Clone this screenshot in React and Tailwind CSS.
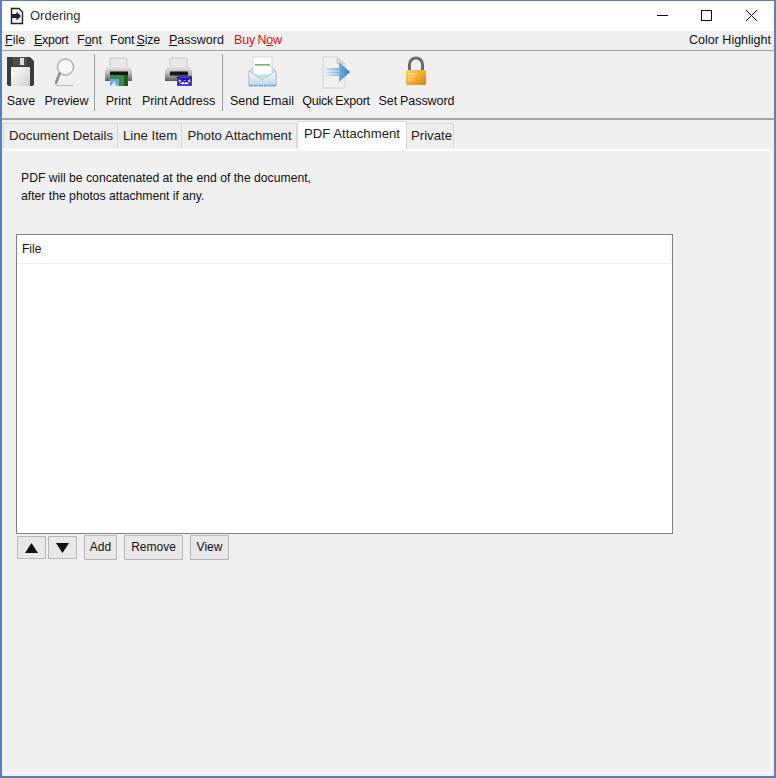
import React from "react";

function DocIcon() {
  return (
    <svg width="16" height="18" viewBox="0 0 16 18">
      <path d="M2.5 1.5H10L13.5 5V16.5H2.5Z" fill="#fbf8e8" stroke="#222" strokeWidth="1.4" />
      <path d="M3 11V7h4.5V4.5L12 9l-4.5 4.5V11Z" fill="#1b1b50" />
    </svg>
  );
}

function SaveIcon() {
  return (
    <svg width="28" height="30" viewBox="0 0 28 30" className="-ml-[2px]">
      <defs>
        <linearGradient id="sv" x1="0" y1="0" x2="1" y2="1">
          <stop offset="0" stopColor="#ffffff" />
          <stop offset="1" stopColor="#cfcfcf" />
        </linearGradient>
      </defs>
      <path d="M1 1H24L28 5V28.5L26.5 30H2.5L1 28.5Z" fill="#3c3c3c" />
      <rect x="7" y="1" width="14" height="9" fill="#4d4d4d" />
      <rect x="14" y="2" width="4" height="7" fill="#dcdcdc" />
      <rect x="5" y="11" width="19" height="19" fill="url(#sv)" />
    </svg>
  );
}

function PreviewIcon() {
  return (
    <svg width="24" height="32" viewBox="0 0 24 32">
      <circle cx="10.5" cy="11" r="8" fill="#f8f8f8" stroke="#bdbdbd" strokeWidth="1.8" />
      <path d="M4.5 17.5L1 27" stroke="#8f8f8f" strokeWidth="2.6" strokeLinecap="round" />
      <path d="M1 29.5H19" stroke="#c4c4c4" strokeWidth="1.4" />
    </svg>
  );
}

function PrinterBody({ id }) {
  return (
    <>
      <defs>
        <linearGradient id={id} x1="0" y1="0" x2="0" y2="1">
          <stop offset="0" stopColor="#e6e6e6" />
          <stop offset="0.45" stopColor="#b7b7b7" />
          <stop offset="1" stopColor="#5c5c5c" />
        </linearGradient>
      </defs>
      <rect x="6" y="1" width="17" height="11" rx="1" fill="#e9e9e9" stroke="#c8c8c8" />
      <path d="M3 10H26L28 14V24H1V14Z" fill={`url(#${id})`} />
      <rect x="6" y="14.5" width="18" height="4" fill="#151515" />
    </>
  );
}

function PrintIcon() {
  return (
    <svg width="29" height="30" viewBox="0 0 29 30" className="mt-px">
      <PrinterBody id="pr1" />
      <rect x="6" y="18" width="18" height="11" fill="#3c8a3c" />
      <rect x="6" y="22" width="9" height="7" fill="#6ea8e0" />
      <path d="M7 29l3-5 3 5" fill="#d9e8f8" />
      <path d="M20 18h4v11h-4z" fill="#1f5a1f" />
    </svg>
  );
}

function PrintAddressIcon() {
  return (
    <svg width="29" height="30" viewBox="0 0 29 30" className="mt-px">
      <PrinterBody id="pr2" />
      <rect x="14" y="20" width="13" height="8" fill="#f5f5ff" stroke="#2018b8" strokeWidth="1.6" />
      <path d="M14 20.5L20.5 25 27 20.5M14 27.5l5-4M27 27.5l-5-4" fill="none" stroke="#2018b8" strokeWidth="1.6" />
      <rect x="16" y="21" width="9" height="2" fill="#2018b8" />
    </svg>
  );
}

function MailIcon() {
  return (
    <svg width="29" height="32" viewBox="0 0 29 32">
      <defs>
        <linearGradient id="ml" x1="0" y1="0" x2="0" y2="1">
          <stop offset="0" stopColor="#fbfdfe" />
          <stop offset="1" stopColor="#bcd6e8" />
        </linearGradient>
      </defs>
      <path d="M1 15L14 5 28 15V29H1Z" fill="#cfdfe8" stroke="#a9bcc8" strokeWidth="0.8" />
      <rect x="5" y="1" width="19" height="18" fill="#fdfdfd" stroke="#c9d2d6" strokeWidth="0.8" />
      <rect x="7" y="8" width="15" height="1.6" fill="#6cb86a" />
      <path d="M1 15L14 24 28 15V30H1Z" fill="url(#ml)" stroke="#a9bcc8" strokeWidth="0.8" />
      <path d="M1 29.5H28" stroke="#4c9cd4" strokeWidth="1.5" strokeDasharray="1.5 1" />
    </svg>
  );
}

function ExportIcon() {
  return (
    <svg width="29" height="33" viewBox="0 0 29 33">
      <defs>
        <linearGradient id="ar" x1="0" y1="0" x2="1" y2="0">
          <stop offset="0" stopColor="#e5eef7" />
          <stop offset="1" stopColor="#2e80c8" />
        </linearGradient>
      </defs>
      <path d="M1 1H15L23 8V32H1Z" fill="#f0f0f0" stroke="#d4d4d4" />
      <path d="M15 1V8H23" fill="#d8d8d8" stroke="#cfcfcf" />
      <path d="M2 12H17V6L28 16 17 26V20H2Z" fill="url(#ar)" />
      <path d="M3 15H17M3 18H17" stroke="#ffffff" strokeWidth="1" opacity="0.7" />
    </svg>
  );
}

function LockIcon() {
  return (
    <svg width="22" height="30" viewBox="0 0 22 30" className="-ml-[2px]">
      <defs>
        <linearGradient id="lk" x1="0" y1="0" x2="1" y2="1">
          <stop offset="0" stopColor="#fbd26a" />
          <stop offset="0.5" stopColor="#f2ac2e" />
          <stop offset="1" stopColor="#d8801a" />
        </linearGradient>
      </defs>
      <path d="M4.5 15V8.5a6.5 6.5 0 0 1 13 0V15" fill="none" stroke="#6b6b6b" strokeWidth="3" />
      <rect x="1" y="14" width="20" height="15" rx="1" fill="url(#lk)" />
      <path d="M3 18H12M3 21H10M3 24H8" stroke="#ffe9a8" strokeWidth="1.2" />
    </svg>
  );
}

function Sep() {
  return <div className="w-px h-[57px] bg-[#9a9a9a] shrink-0" />;
}

function Tool({ icon, label, width, tight }) {
  return (
    <div className={`flex flex-col items-center shrink-0 ${width}`}>
      <div className="h-[38px] flex items-start justify-center">{icon}</div>
      <span className={`text-[12.5px] leading-[15px] whitespace-nowrap ${tight || ""}`}>{label}</span>
    </div>
  );
}

function Tab({ label, width }) {
  return (
    <div className={`h-[25px] mt-[2px] flex items-center justify-center border-t border-r border-[#d9d9d9] bg-[#eeeeee] text-[13.2px] text-[#222] whitespace-nowrap ${width}`}>
      {label}
    </div>
  );
}

function Btn({ children, width, height }) {
  return (
    <div className={`flex items-center justify-center border border-[#b8b8b8] bg-[#e8e8e8] text-[12px] pb-[2px] text-[#111] ${width} ${height}`}>
      {children}
    </div>
  );
}

function Arrow({ down }) {
  return (
    <svg width="13" height="10" viewBox="0 0 13 10" className="mt-[2px]">
      <path d={down ? "M0 0H13L6.5 10Z" : "M6.5 0L13 10H0Z"} fill="#111" />
    </svg>
  );
}

export default function App() {
  return (
    <div className="w-[776px] h-[778px] flex flex-col border-x-2 border-b-2 border-t border-[#5a80b4] bg-[#f0f0f0] text-[#111] font-['Liberation_Sans',Arial,sans-serif] overflow-hidden">
      <div className="h-[30px] bg-white flex items-center shrink-0">
        <div className="ml-[7px] mt-[-1px]"><DocIcon /></div>
        <span className="ml-[5px] text-[13px] text-[#333]">Ordering</span>
        <div className="ml-auto flex items-center">
          <svg width="46" height="30" viewBox="0 0 46 30"><path d="M22 14.5H33" stroke="#111" /></svg>
          <svg width="46" height="30" viewBox="0 0 46 30"><rect x="20.5" y="9.5" width="10" height="10" fill="none" stroke="#111" /></svg>
          <svg width="46" height="30" viewBox="0 0 46 30" className="mr-[1px]"><path d="M19 9L30 20M30 9L19 20" stroke="#111" /></svg>
        </div>
      </div>

      <div className="h-[19px] flex items-center text-[12.5px] shrink-0 border-b border-[#a0a0a0] box-content">
        <div className="flex items-center ml-[3px] whitespace-nowrap">
          <span className="w-[29px]"><u>F</u>ile</span>
          <span className="w-[43px] tracking-[-0.3px]"><u>E</u>xport</span>
          <span className="w-[33px]">F<u>o</u>nt</span>
          <span className="w-[59px] [word-spacing:-1px] tracking-[-0.2px]">Font <u>S</u>ize</span>
          <span className="w-[65px]"><u>P</u>assword</span>
          <span className="text-[#e01010] [word-spacing:-1px] tracking-[-0.15px]">Buy N<u>o</u>w</span>
        </div>
        <span className="ml-auto mr-[3px]">Color Highlight</span>
      </div>

      <div className="h-[67px] flex items-start shrink-0 border-b-2 border-[#a8a8a8] box-content">
        <div className="flex items-start pt-[5px]">
          <Tool icon={<SaveIcon />} label="Save" width="w-[36px] ml-[1px]" />
          <Tool icon={<PreviewIcon />} label="Preview" width="w-[51px] ml-[2px]" tight="tracking-[-0.1px]" />
          <div className="ml-[2px] -mt-[2px]"><Sep /></div>
          <Tool icon={<PrintIcon />} label="Print" width="w-[45px] ml-px" />
          <Tool icon={<PrintAddressIcon />} label="Print Address" width="w-[75px]" tight="[word-spacing:-0.5px] tracking-[-0.05px]" />
          <div className="ml-[6px] -mt-[2px]"><Sep /></div>
          <Tool icon={<MailIcon />} label="Send Email" width="w-[78px]" />
          <Tool icon={<ExportIcon />} label="Quick Export" width="w-[70px]" tight="[word-spacing:-1px] tracking-[-0.25px]" />
          <Tool icon={<LockIcon />} label="Set Password" width="w-[91px]" tight="[word-spacing:-0.5px] tracking-[-0.05px]" />
        </div>
      </div>

      <div className="flex items-start h-[28px] pl-[1px] shrink-0 mt-[1px]">
        <Tab label="Document Details" width="w-[115px] border-l pl-px" />
        <Tab label="Line Item" width="w-[64px] pl-px" />
        <Tab label="Photo Attachment" width="w-[115px] pl-px" />
        <div className="w-[110px] h-[28px] flex items-center justify-center bg-white border-x border-t border-[#d9d9d9] text-[13.2px] pb-[3px] text-[#222] whitespace-nowrap">
          PDF Attachment
        </div>
        <Tab label="Private" width="w-[47px] pl-[3px]" />
      </div>

      <div className="flex-1 flex flex-col mx-[1px] mr-[2px] border-t-2 border-t-white border-b-2 border-b-[#f8f8f8] border-r border-r-[#f8f8f8] pl-[13px] min-h-0 mb-[2px]">
        <p className="ml-[5px] mt-[18px] text-[12.2px] leading-[18px] text-[#111]">
          PDF will be concatenated at the end of the document,
          <br />
          after the photos attachment if any.
        </p>
        <div className="mt-[29px] w-[657px] h-[300px] border border-[#808080] bg-white shrink-0">
          <div className="h-[29px] w-[654px] flex items-center pl-[5px] text-[12px] border-b border-r border-[#eeeeee]">File</div>
        </div>
        <div className="flex items-center mt-px">
          <div className="ml-px"><Btn width="w-[29px]" height="h-[23px]"><Arrow /></Btn></div>
          <div className="ml-[2px]"><Btn width="w-[29px]" height="h-[23px]"><Arrow down /></Btn></div>
          <div className="ml-[7px]"><Btn width="w-[33px]" height="h-[25px]">Add</Btn></div>
          <div className="ml-[7px]"><Btn width="w-[59px]" height="h-[25px]">Remove</Btn></div>
          <div className="ml-[7px]"><Btn width="w-[39px]" height="h-[25px]">View</Btn></div>
        </div>
      </div>
    </div>
  );
}
